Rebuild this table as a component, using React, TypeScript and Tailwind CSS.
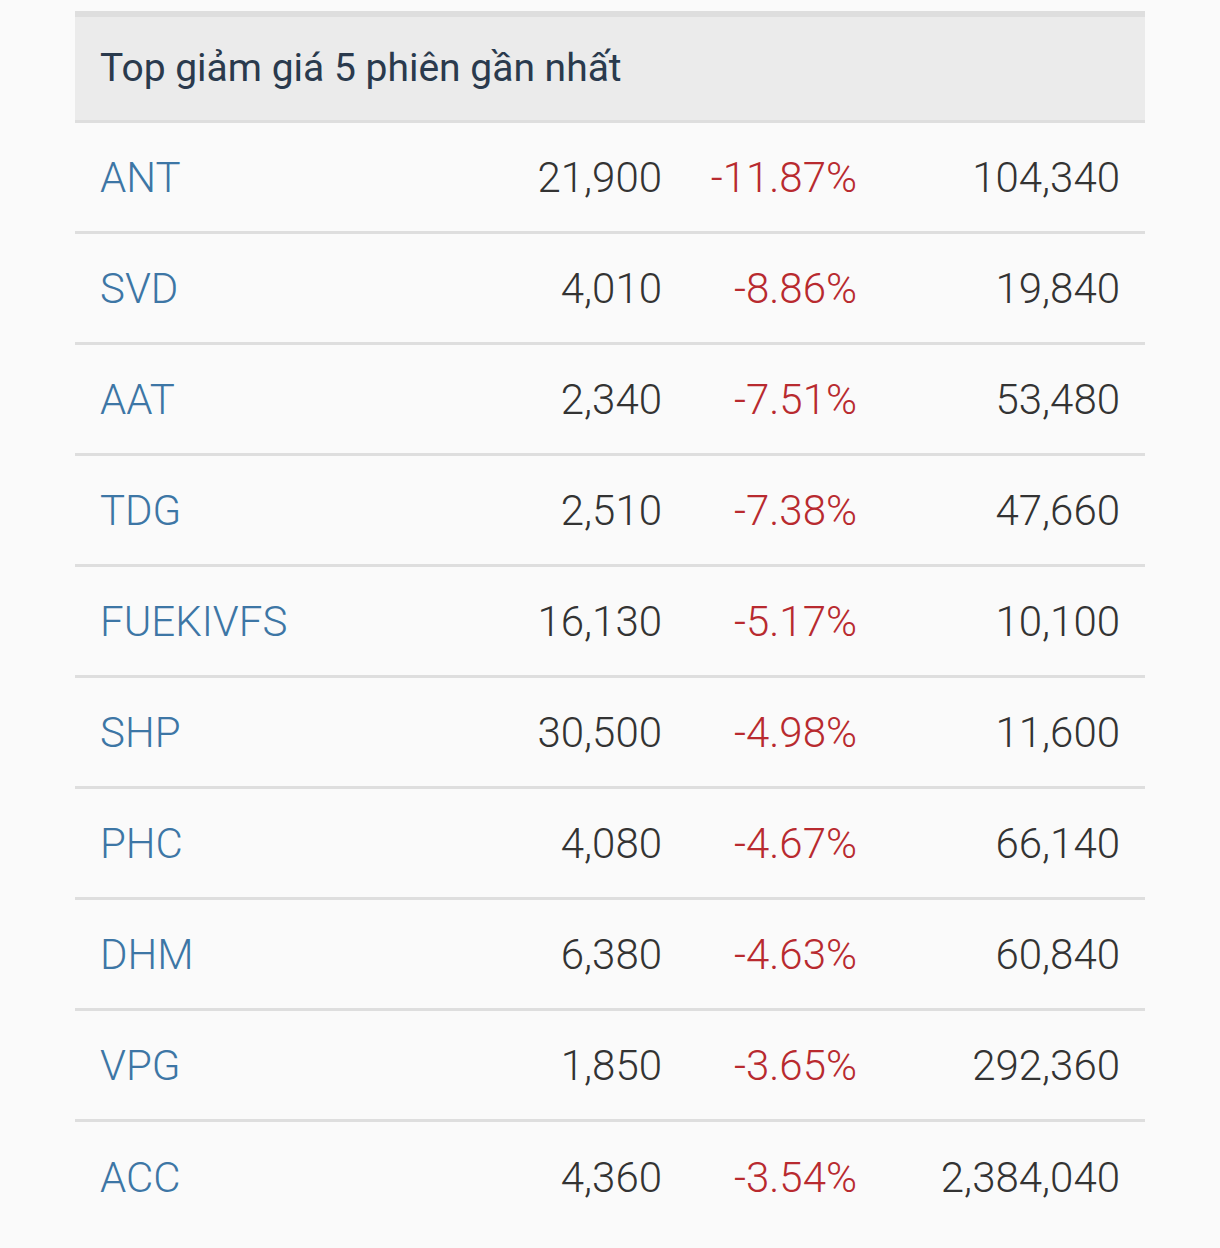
import React from "react";

type Row = { symbol: string; price: string; change: string; volume: string };

const rows: Row[] = [
  { symbol: "ANT", price: "21,900", change: "-11.87%", volume: "104,340" },
  { symbol: "SVD", price: "4,010", change: "-8.86%", volume: "19,840" },
  { symbol: "AAT", price: "2,340", change: "-7.51%", volume: "53,480" },
  { symbol: "TDG", price: "2,510", change: "-7.38%", volume: "47,660" },
  { symbol: "FUEKIVFS", price: "16,130", change: "-5.17%", volume: "10,100" },
  { symbol: "SHP", price: "30,500", change: "-4.98%", volume: "11,600" },
  { symbol: "PHC", price: "4,080", change: "-4.67%", volume: "66,140" },
  { symbol: "DHM", price: "6,380", change: "-4.63%", volume: "60,840" },
  { symbol: "VPG", price: "1,850", change: "-3.65%", volume: "292,360" },
  { symbol: "ACC", price: "4,360", change: "-3.54%", volume: "2,384,040" },
];

const App: React.FC = () => {
  return (
    <div
      className="min-h-[1248px] w-full bg-[#fafafa] px-[75px] pt-[11px]"
      style={{ fontFamily: "Roboto, 'Liberation Sans', sans-serif" }}
    >
      {/* header */}
      <div className="flex h-[112px] items-center border-t-[6px] border-b-[3px] border-[#dedede] bg-[#ebebeb] px-[25px]">
        <h3 className="text-[39px] font-normal text-[#2a3a4d]">
          Top giảm giá 5 phiên gần nhất
        </h3>
      </div>

      {rows.map((r) => (
        <div
          key={r.symbol}
          className="grid h-[111px] grid-cols-[300px_262px_195px_263px] items-center border-b-[3px] border-[#dedede] px-[25px] text-[42px] font-light last:border-b-0"
        >
          <span className="text-[#3d76a5]">{r.symbol}</span>
          <span className="text-right text-[#333333]">{r.price}</span>
          <span className="text-right text-[#b82a2f]">{r.change}</span>
          <span className="text-right text-[#333333]">{r.volume}</span>
        </div>
      ))}
    </div>
  );
};

export default App;
